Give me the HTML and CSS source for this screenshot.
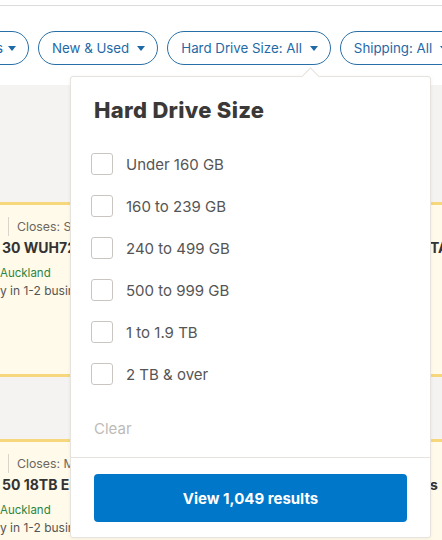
FILE: index.html
```html
<!DOCTYPE html>
<html lang="en">
<head>
<meta charset="utf-8">
<title>Hard Drive Size filter</title>
<link rel="stylesheet" href="styles.css">
</head>
<body>
<div class="topbar"></div>
<div class="filters">
  <div class="pill pill-partial"><span>Categories</span><i class="caret"></i></div>
  <div class="pill"><span>New &amp; Used</span><i class="caret"></i></div>
  <div class="pill"><span>Hard Drive Size: All</span><i class="caret"></i></div>
  <div class="pill"><span>Shipping: All</span><i class="caret"></i></div>
</div>
<main class="results">
  <article class="card">
    <div class="card-left">
      <div class="meta"><span class="divider"></span><span>Closes: Sat</span></div>
      <div class="title t1">30 WUH72</div>
      <div class="loc">Auckland</div>
      <div class="ship">y in 1-2 busin</div>
    </div>
    <div class="card-right">
      <div class="title">TA</div>
    </div>
  </article>
  <article class="card">
    <div class="card-left">
      <div class="meta"><span class="divider"></span><span>Closes: Mon</span></div>
      <div class="title t2">50 18TB Ent</div>
      <div class="loc">Auckland</div>
      <div class="ship">y in 1-2 busin</div>
    </div>
    <div class="card-right">
      <div class="title">s</div>
    </div>
  </article>
</main>

<section class="dropdown">
  <span class="notch"></span>
  <h2 class="dd-title">Hard Drive Size</h2>
  <ul class="options">
    <li class="option"><span class="box"></span><span>Under 160 GB</span></li>
    <li class="option"><span class="box"></span><span>160 to 239 GB</span></li>
    <li class="option"><span class="box"></span><span>240 to 499 GB</span></li>
    <li class="option"><span class="box"></span><span>500 to 999 GB</span></li>
    <li class="option"><span class="box"></span><span>1 to 1.9 TB</span></li>
    <li class="option"><span class="box"></span><span>2 TB &amp; over</span></li>
  </ul>
  <div class="clear">Clear</div>
  <div class="dd-footer">
    <button class="view-btn">View 1,049 results</button>
  </div>
</section>
</body>
</html>
```
FILE: styles.css
```css
* { box-sizing: border-box; }
html, body { margin: 0; padding: 0; }
body {
  width: 442px;
  height: 540px;
  overflow: hidden;
  position: relative;
  background: #ffffff;
  font-family: Inter, "Noto Sans", Arial, sans-serif;
  color: #333;
}
.topbar {
  height: 6px;
  border-bottom: 1px solid #dcdcdc;
  background: #fff;
}
.filters {
  display: flex;
  gap: 9px;
  padding: 25px 0 20px 0;
  height: 79px;
  overflow: hidden;
  background: #fff;
}
.pill {
  flex: none;
  display: flex;
  align-items: center;
  gap: 8px;
  height: 34px;
  padding: 0 12px 0 13px;
  border: 1.5px solid #2a70a8;
  border-radius: 17px;
  color: #1f69a6;
  font-size: 13.3px;
  white-space: nowrap;
}
.pill-partial {
  width: 100px;
  margin-left: -71px;
  justify-content: flex-end;
  overflow: hidden;
  gap: 5px;
}
.caret {
  width: 0; height: 0;
  border-left: 4.5px solid transparent;
  border-right: 4.5px solid transparent;
  border-top: 5px solid #1f69a6;
  margin-top: 1px;
}
.results {
  background: #f4f3f1;
  height: 455px;
  padding-top: 117px;
  overflow: hidden;
}
.card {
  display: flex;
  justify-content: space-between;
  height: 175px;
  background: #fffaea;
  border-top: 3px solid #f7d77c;
  border-bottom: 3px solid #f7d77c;
  margin-bottom: 62px;
  overflow: hidden;
}
.card-left {
  width: 70px;
  flex: none;
  padding-top: 11px;
  overflow: hidden;
  white-space: nowrap;
}
.card-right {
  width: 12px;
  flex: none;
  padding-top: 11px;
  overflow: hidden;
  white-space: nowrap;
}
.meta {
  display: flex;
  align-items: center;
  height: 20px;
  font-size: 12.3px;
  color: #6b6661;
}
.divider {
  flex: none;
  width: 1px;
  height: 19px;
  background: #d9d4cc;
  margin: 0 8px 0 8px;
}
.title {
  font-size: 14px;
  font-weight: 700;
  color: #333;
  line-height: 21px;
  margin-top: 1px;
}
.t1, .t2 { padding-left: 2px; }
.card-right .title { margin-top: 21px; }
.loc {
  margin-top: 5px;
  font-size: 11.5px;
  line-height: 20px;
  color: #2e8540;
}
.ship {
  font-size: 12px;
  line-height: 16px;
  color: #555;
}

/* Dropdown overlay */
.dropdown {
  position: absolute;
  left: 70px;
  top: 76px;
  width: 361px;
  height: 462px;
  background: #fff;
  border: 1px solid #e6e2dd;
  border-radius: 3px;
  box-shadow: 0 1px 4px rgba(0,0,0,0.06);
}
.notch {
  position: absolute;
  top: -7px;
  left: 233px;
  width: 13px;
  height: 13px;
  background: #fff;
  border-top: 1px solid #e6e2dd;
  border-left: 1px solid #e6e2dd;
  transform: rotate(45deg);
}
.dd-title {
  margin: 0;
  padding: 19px 0 0 23px;
  font-size: 22px;
  line-height: 28px;
  font-weight: 800;
  color: #3a3937;
  letter-spacing: 0.3px;
}
.options {
  list-style: none;
  margin: 19px 0 0 0;
  padding: 0 0 0 20px;
}
.option {
  display: flex;
  align-items: center;
  gap: 13px;
  height: 42px;
  font-size: 15px;
  color: #555;
}
.box {
  flex: none;
  width: 22px;
  height: 22px;
  border: 1px solid #c9c6c2;
  border-radius: 3px;
  background: #fff;
}
.clear {
  margin-top: 23px;
  padding: 0 0 17px 23px;
  font-size: 15px;
  line-height: 22px;
  color: #bdbbb8;
}
.dd-footer {
  border-top: 1px solid #e6e2dd;
  padding: 16px 23px 14px 23px;
}
.view-btn {
  display: block;
  width: 100%;
  height: 48px;
  border: 0;
  border-radius: 4px;
  background: #0177c9;
  color: #fff;
  font-family: inherit;
  font-size: 15px;
  font-weight: 700;
}
```
